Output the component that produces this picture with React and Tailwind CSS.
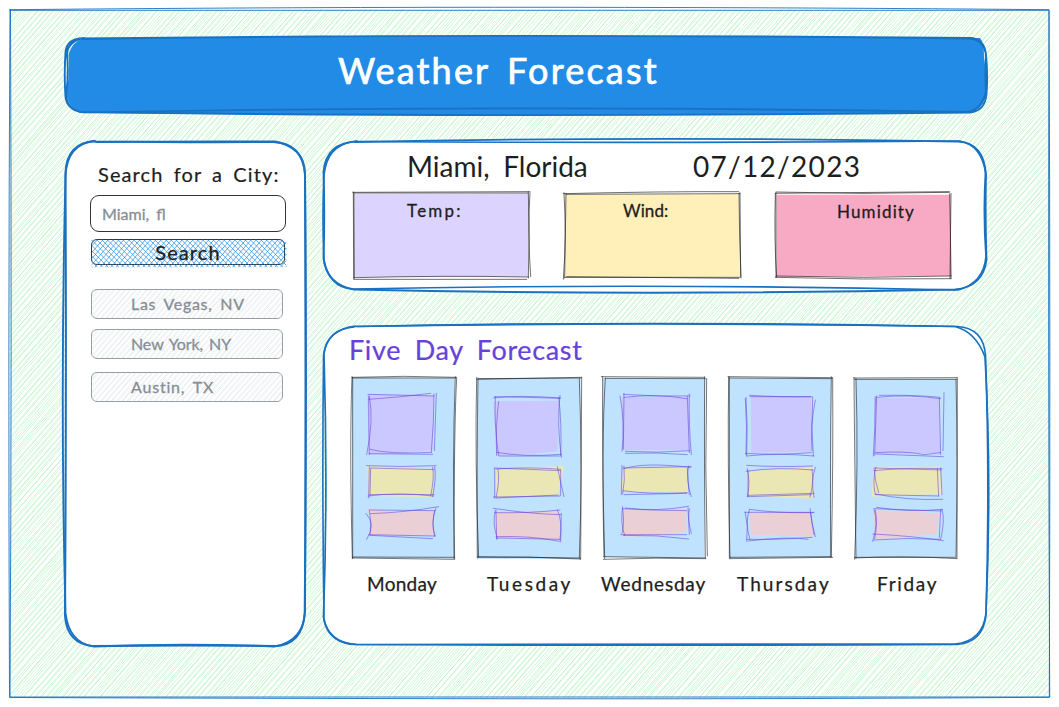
import React from "react";

const INK = "#1e1e1e";
const BLUE = "#1971c2";
const VIOLET = "#6741d9";

function Sketch({ viewBox, children }) {
  return (
    <svg
      aria-hidden="true"
      viewBox={viewBox}
      preserveAspectRatio="none"
      fill="none"
      strokeLinecap="round"
      className="pointer-events-none absolute inset-0 h-full w-full overflow-visible"
    >
      {children}
    </svg>
  );
}

// Diagonal pen strokes with a small, repeatable wobble.
function hatchPath(w, h, step, slope, wobble, passes, flip) {
  let seed = 7;
  const rnd = () => {
    seed = (seed * 16807) % 2147483647;
    return (seed / 2147483647 - 0.5) * 2 * wobble;
  };
  const run = h / slope;
  let d = "";
  for (let x = -run; x < w; x += step) {
    for (let p = 0; p < passes; p++) {
      const a = x + p * 1.6 + rnd();
      const b = x + p * 1.6 + run + rnd();
      const t0 = Math.max(0, -a / (b - a));
      const t1 = Math.min(1, (w - a) / (b - a));
      if (t1 <= t0) continue;
      const x0 = a + (b - a) * t0;
      const x1 = a + (b - a) * t1;
      const y0 = flip ? h * t0 : h - h * t0;
      const y1 = flip ? h * t1 : h - h * t1;
      d += `M${x0.toFixed(1)} ${y0.toFixed(1)}L${x1.toFixed(1)} ${y1.toFixed(1)}`;
    }
  }
  return d;
}

const FRAME_HATCH = hatchPath(1040, 688, 5.45, 1.15, 1.1, 2, false);
const BUTTON_HATCH =
  hatchPath(194, 27, 5.3, 1.15, 0.3, 1, false) + hatchPath(194, 27, 5.3, 1, 0.3, 1, true);
const CITY_HATCH = hatchPath(190, 28, 5.4, 1.15, 0.5, 2, false);

const DAYS = [
  {
    name: "Monday",
    label: "ml-[15px] tracking-[0.3px]",
    view: "66 54 309 540",
    card: "M66 52L375 54L372 596L68 594Z",
    edge: "M66 52Q220 46 380 52M68 54L376 54M376 50Q366 300 374 598M380 54Q372 200 372 595M66 50Q58 260 67 596M68 52L68 594M68 594L372 598M68 591L374 592",
    a: "M112 102L312 106L308 270L210 282L116 284Z",
    b: "M112 318L312 328L308 412L116 408Z",
    c: "M110 444L200 458L314 450Q302 490 314 528L114 526Q128 490 118 458Z",
    pen: "M114 103L312 108M116 118Q210 112 302 100M118 108Q132 180 110 284M116 110Q116 200 118 284M312 102Q312 190 304 276M319 100L313 272M120 268Q180 284 305 277M118 281L308 283M110 317Q210 322 318 317M122 324L312 329M118 320L116 414M122 326L120 408M314 320Q320 350 308 410M308 322Q314 350 302 408M114 408Q200 396 310 408M118 404Q220 402 312 404M120 450L314 452M122 461Q220 458 326 440M108 460Q140 495 110 538M118 450Q126 490 120 524M318 444Q300 490 316 528M314 452Q304 490 314 530M116 524L312 528M120 526L308 536",
  },
  {
    name: "Tuesday",
    label: "ml-[9px] tracking-[2.6px]",
    view: "444 54 309 540",
    card: "M442 54L752 54L750 598L440 596Z",
    edge: "M440 58L755 52M446 56L752 54M440 52Q434 300 446 592M444 54Q440 300 442 594M748 56Q758 330 748 594M755 52L752 598M442 590L750 594M446 592Q600 588 752 597",
    a: "M508 124L686 122L682 274L600 282L500 288L490 126Z",
    b: "M496 328L702 318L684 408L500 412Z",
    c: "M496 458L686 452L692 540L500 532Z",
    pen: "M494 110Q600 112 690 115M490 114Q560 104 692 114M496 110Q492 200 506 286M506 124Q496 200 500 286M690 106Q680 190 694 292M686 112Q696 190 692 288M500 277Q580 292 694 283M508 288L688 288M492 324L692 332M498 327Q600 320 692 328M494 326L494 414M504 328Q510 360 498 414M682 320Q690 360 702 410M692 332L692 406M490 411L690 408M500 414L684 405M490 445Q600 462 692 464M494 458Q600 460 690 450M496 452Q486 490 502 536M498 450L500 538M682 450Q698 480 690 540M694 460L692 546M498 530Q600 526 688 544M500 534L690 538",
  },
  {
    name: "Wednesday",
    label: "-ml-[3px] tracking-[0.8px]",
    view: "42 54 309 540",
    card: "M38 54L346 54L344 594L42 592Z",
    edge: "M34 50L344 52M46 55L346 56M38 50Q36 300 44 596M46 54Q34 250 42 588M344 50Q342 300 346 594M350 56Q344 320 352 588M40 590L346 594M40 598Q200 592 348 596",
    a: "M94 110L296 112L298 270L96 270Z",
    b: "M102 322L292 322L294 398L92 394Z",
    c: "M98 446L200 452L290 446L288 516L200 528L96 530Z",
    pen: "M100 103Q200 110 300 108M102 112Q200 100 290 116M90 108Q106 190 96 274M102 100L100 268M298 102Q296 200 304 284M292 108L298 278M106 274Q200 280 300 272M106 280Q200 276 292 284M98 324L304 320M102 326Q160 306 302 322M96 316L94 404M102 318Q106 360 98 402M296 318Q286 360 304 410M292 324L298 404M98 392Q180 404 292 398M102 404L290 400M98 446Q200 452 290 452M106 444Q200 456 296 439M98 440Q90 490 104 526M98 446Q104 490 96 520M298 446Q292 480 304 520M294 444L298 524M92 524L290 524M100 526Q200 524 296 537",
  },
  {
    name: "Thursday",
    label: "ml-[7px] tracking-[2.1px]",
    view: "420 54 309 540",
    card: "M416 54L724 54L724 592L418 594Z",
    edge: "M414 50L728 53M418 54L724 56M416 50Q412 300 420 594M418 52L418 592M724 50Q720 300 722 590M728 54Q730 300 724 592M418 596L728 592M420 592L722 590",
    a: "M482 110L664 110L664 276L484 278Z",
    b: "M470 334L672 322L670 416L474 408Z",
    c: "M480 460L660 456L672 530L482 524Z",
    pen: "M478 106Q580 112 664 110M480 110L662 110M468 112Q474 200 470 288M466 116Q472 200 468 284M668 110Q662 200 670 288M676 120Q660 200 666 272M466 280Q560 286 664 278M470 288Q560 278 672 288M470 316Q560 322 668 318M468 334Q560 320 670 330M472 326Q482 370 472 410M474 332L474 408M676 322Q662 360 672 412M666 328Q672 370 660 412M474 406L672 400M472 410L664 404M478 448Q560 460 670 458M464 457L672 457M466 456Q476 500 470 544M478 450Q464 490 480 538M660 446Q664 490 676 530M662 460L672 524M470 538Q560 540 666 532M474 543Q600 528 654 538",
  },
  {
    name: "Friday",
    label: "ml-[21px] tracking-[1.7px]",
    view: "108 54 309 540",
    card: "M104 56L410 56L408 592L108 592Z",
    edge: "M102 54L412 53M104 58L410 58M102 52Q104 300 108 594M108 56Q116 300 104 598M412 54L411 596M408 58Q414 300 408 592M106 594Q250 586 410 596M104 592L406 592",
    a: "M162 114L358 114L360 280L164 282Z",
    b: "M160 320L360 320L368 402L156 410Z",
    c: "M160 450L356 460L354 522L166 538Z",
    pen: "M178 106Q280 104 360 112M170 112Q260 102 362 116M166 110Q166 200 160 288M170 108L164 286M358 114L362 284M372 98L369 272M168 282L370 290M166 278Q260 272 312 284L362 278M164 324L364 330M162 332Q260 322 366 326M168 322Q156 360 166 404M162 324Q164 360 176 398M352 326L356 408M362 324L366 404M166 404L356 408M168 402Q260 422 368 418M170 442Q260 458 368 448M162 446L364 453M162 448Q176 490 158 544M166 450Q174 490 164 536M362 450L358 532M366 448Q376 480 362 538M158 522Q280 528 370 542M160 540Q260 532 362 538",
  },
];

const STATS = [
  {
    name: "Temp:",
    box: "w-[175px] pl-[53px] pt-[8px]",
    text: "tracking-[2.2px]",
    view: "132 189 525 255",
    fill: "#ddd3ff",
    area: "M134 192L656 190L654 440L134 442Z",
    edge: "M128 187L660 185M132 189L654 189M130 186L131 447M132 190L133 444M655 186Q660 320 655 444M660 188Q652 300 662 440M132 448L650 448M132 443Q400 436 656 441",
  },
  {
    name: "Wind:",
    box: "ml-[35px] w-[176px] pl-[59px] pt-[8px]",
    text: "tracking-[0.1px]",
    view: "762 189 528 255",
    fill: "#ffefb8",
    area: "M766 194L1286 192L1290 440L766 444Z",
    edge: "M760 191Q1050 184 1286 185M768 193L1290 191M762 188Q770 320 760 448M768 190L764 444M1287 190Q1288 320 1293 444M1290 188L1292 440M764 442L1290 442M770 440L1286 445",
  },
  {
    name: "Humidity",
    box: "ml-[36px] w-[174px] pl-[61px] pt-[9px]",
    text: "tracking-[1.15px]",
    view: "378 189 522 255",
    fill: "#f8a9c4",
    area: "M380 194L900 194L904 438L380 440Z",
    edge: "M376 190L898 185M378 186Q640 194 898 187M376 190Q372 330 380 442M378 188L378 440M903 190L900 446M899 192Q902 330 903 444M378 438Q640 446 904 438M376 442Q640 450 904 446",
  },
];

const CITIES = [
  { name: "Las Vegas, NV", gap: "mt-[24px]", text: "tracking-[0.7px] [word-spacing:3px]" },
  { name: "New York, NY", gap: "mt-[10px]", text: "tracking-[-0.1px] [word-spacing:2px]" },
  { name: "Austin, TX", gap: "mt-[13px]", text: "tracking-[0.8px] [word-spacing:3px]" },
];

function Header() {
  return (
    <header className="relative flex h-[75px] w-[920px] items-center pb-[12px] pl-[272px]">
      <Sketch viewBox="66 38 920 75">
        <path
          fill="#228be6"
          d="M82 38.5Q500 33.5 980 38Q984 42 984 56Q987 75 985 98Q982 110 970 112.5Q500 117.5 81 113Q68 108 66.5 94Q70 74 68.5 54Q73 41 84 38Z"
        />
        <path
          stroke={BLUE}
          strokeWidth="1.9"
          d="M82 39Q500 33 970 38.5Q984 40 986 55Q988 75 986.5 94Q985 111 970 112.5Q500 118 80 112Q67 109 65.500 97Q64 75 65.500 52Q67 39 82 38.300M79 38.500Q500 33.500 972 38Q986 41 986 57Q985 77 986 92Q981 111 966 112Q500 104.500 83 112.500Q67 110 66 95Q69 75 67 54Q68 41 84 38"
        />
      </Sketch>
      <h1 className="relative whitespace-nowrap text-[36px] leading-none tracking-[2.2px] text-white [-webkit-text-stroke:0.7px_white] [word-spacing:6px]">
        Weather Forecast
      </h1>
    </header>
  );
}

function Sidebar() {
  return (
    <aside className="relative h-[505px] w-[239px] pl-[24px] pt-[19px]">
      <Sketch viewBox="66 141 239 505">
        <path
          fill="#fff"
          stroke={BLUE}
          strokeWidth="2"
          d="M93 141.500Q190 142.500 273 142Q303 143 305 175Q307 390 304.700 613Q303 645 274 646.500Q185 643 94 646.500Q67 644 65 616Q66.500 390 65.500 172Q67 143 95 141"
        />
        <path
          stroke={BLUE}
          strokeWidth="1.9"
          d="M96 142Q190 141 275 141.500Q304 147 305 173Q306 390 305 612Q303 641 276 646Q185 645 92 646Q69 642 65.500 613Q60 400 65.500 176Q67 144 94 141"
        />
      </Sketch>
      <h2 className="relative ml-[8px] h-7 whitespace-nowrap text-[20px] leading-7 tracking-[1.1px] text-[#1e1e1e] [-webkit-text-stroke:0.2px] [word-spacing:4px]">
        Search for a City:
      </h2>
      <div className="relative mt-[7px] flex h-[37px] w-[196px] items-center rounded-[9px] border-[1.5px] border-[#343434] bg-white pl-[11px]">
        <span className="whitespace-nowrap text-[16px] leading-none text-[#868e96] [-webkit-text-stroke:0.3px] [word-spacing:3px]">
          Miami, fl
        </span>
      </div>
      <button
        type="button"
        className="relative ml-px mt-[7px] flex h-[26px] w-[194px] items-center justify-center rounded-[6px] border-[1.5px] border-[#343434]"
      >
        <Sketch viewBox="0 0 192 24">
          <path stroke="#228be6" strokeOpacity="0.7" strokeWidth="1" d={BUTTON_HATCH} />
        </Sketch>
        <span className="relative whitespace-nowrap text-[20px] leading-none tracking-[1.1px] text-[#1e1e1e] [-webkit-text-stroke:0.3px]">
          Search
        </span>
      </button>
      <ul>
        {CITIES.map((city) => (
          <li
            key={city.name}
            className={`relative ml-px flex h-[30px] w-[192px] items-center rounded-[6px] border-[1.5px] border-[#9299a1] pl-[39px] ${city.gap}`}
          >
            <Sketch viewBox="0 0 190 28">
              <path stroke="#dee2e6" strokeWidth="0.6" d={CITY_HATCH} />
            </Sketch>
            <span
              className={`relative whitespace-nowrap text-[16px] leading-none text-[#868e96] [-webkit-text-stroke:0.3px] ${city.text}`}
            >
              {city.name}
            </span>
          </li>
        ))}
      </ul>
    </aside>
  );
}

function CurrentWeather() {
  return (
    <section className="relative h-[149px] w-[662px] pt-[9px]">
      <Sketch viewBox="324 141 662 149">
        <path
          fill="#fff"
          stroke={BLUE}
          strokeWidth="1.9"
          d="M355 142Q650 136 958 141.500Q984 143 986 175Q985 215 986.500 260Q983 287 955 289.500Q650 296 354 289.500Q326 284 323.500 258Q325 215 323.500 172Q326 143 357 141.300"
        />
        <path
          stroke={BLUE}
          strokeWidth="1.7"
          d="M354 141.500Q650 143.500 960 141Q981 145 985.500 172Q983 215 986 256Q984 283 958 290Q650 283 352 289Q329 287 324 260Q322 215 324 175Q327 146 352 142"
        />
      </Sketch>
      <div className="relative flex h-8 whitespace-nowrap pl-[83px] text-[28px] leading-8 text-[#1e1e1e]">
        <div className="w-[286px] [word-spacing:6.500px]">Miami, Florida</div>
        <div className="tracking-[1.3px]">07/12/2023</div>
      </div>
      <div className="relative mt-[11px] flex pl-[30px]">
        {STATS.map((s) => (
          <div key={s.name} className={`relative h-[85px] ${s.box}`}>
            <Sketch viewBox={s.view}>
              <path fill={s.fill} d={s.area} />
              <path stroke={INK} strokeOpacity="0.8" strokeWidth="2.4" d={s.edge} />
            </Sketch>
            <span
              className={`relative block h-5 w-max text-[17px] leading-5 text-[#1e1e1e] [-webkit-text-stroke:0.3px] ${s.text}`}
            >
              {s.name}
            </span>
          </div>
        ))}
      </div>
    </section>
  );
}

function FiveDay() {
  return (
    <section className="relative h-[319px] w-[662px] pt-[8px]">
      <Sketch viewBox="324 326 662 319">
        <path
          fill="#fff"
          stroke={BLUE}
          strokeWidth="1.7"
          d="M355 326.500Q650 320.500 957 326.500Q984 328 985.500 356Q990 480 986 615Q983 643 956 644.500Q650 646 356 644.500Q328 643 323.500 617Q328 490 324 354Q327 329 356 326"
        />
        <path
          stroke={BLUE}
          strokeWidth="1.6"
          d="M357 326.500Q650 321.500 955 326.500Q976 332 985 357Q992 480 986 613Q983 641 955 644Q650 644.500 358 644.500Q329 644 324 620Q322 490 323.500 356Q326 330 354 327"
        />
      </Sketch>
      <h2 className="relative ml-[25px] h-8 w-max text-[27px] leading-8 tracking-[0.65px] text-[#6741d9] [-webkit-text-stroke:0.2px] [word-spacing:6px]">
        Five Day Forecast
      </h2>
      <div className="mt-[12px] flex gap-[23px] pl-[28px]">
        {DAYS.map((day) => (
          <div key={day.name} className="w-[103px]">
            <div className="relative h-[180px]">
              <Sketch viewBox={day.view}>
                <path fill="#bfe3ff" d={day.card} />
                <path stroke={INK} strokeOpacity="0.75" strokeWidth="2.4" d={day.edge} />
                <path fill="#cac8ff" d={day.a} />
                <path fill="#ebe7b4" d={day.b} />
                <path fill="#ebcfd6" d={day.c} />
                <path stroke={VIOLET} strokeOpacity="0.8" strokeWidth="2.1" d={day.pen} />
              </Sketch>
            </div>
            <div
              className={`relative mt-[14px] h-6 w-max text-[19px] leading-6 text-[#1e1e1e] [-webkit-text-stroke:0.25px] ${day.label}`}
            >
              {day.name}
            </div>
          </div>
        ))}
      </div>
    </section>
  );
}

export default function App() {
  return (
    <main className="relative h-[707px] w-[1059px] overflow-hidden bg-white pl-[66px] pt-[38px] font-[Lato,sans-serif]">
      <Sketch viewBox="0 0 1059 707">
        <g transform="translate(10 10)">
          <path stroke="#b2f2bb" strokeWidth="0.65" d={FRAME_HATCH} />
        </g>
        <path
          stroke={BLUE}
          strokeWidth="0.9"
          d="M10 10.300L1049 10.300Q1048 350 1049.700 697L10 697Q12 350 10.500 10M10 9.700Q300 7 560 7.300T1049 9.700Q1050.500 350 1049.300 697.300Q800 699 560 698.800T9.500 697.500Q8 350 10 9.500"
        />
      </Sketch>
      <Header />
      <div className="mt-[28px] flex gap-[19px]">
        <Sidebar />
        <div className="flex flex-col gap-[36px]">
          <CurrentWeather />
          <FiveDay />
        </div>
      </div>
    </main>
  );
}
